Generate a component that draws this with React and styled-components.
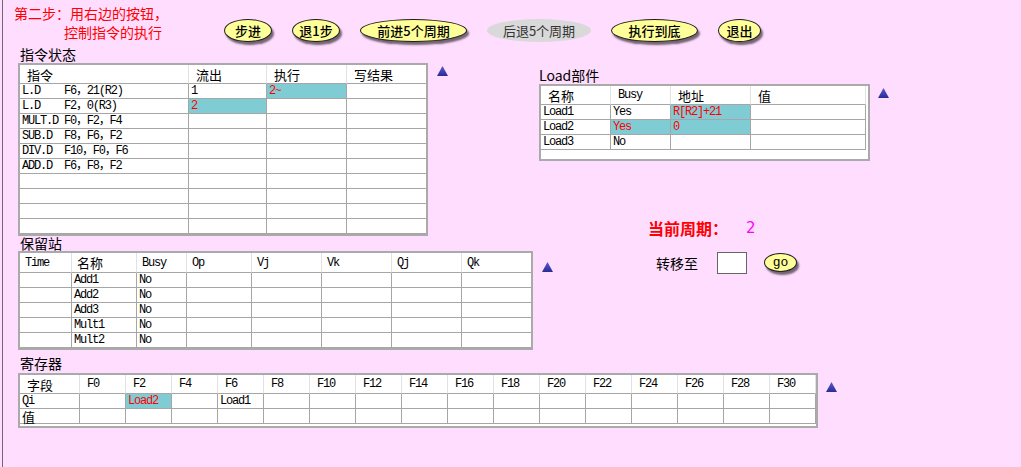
import React from "react";
import styled, { createGlobalStyle } from "styled-components";

const MONO = `"Liberation Mono", "Noto Sans CJK SC", monospace`;
const CJK = `"Noto Sans CJK SC", "Liberation Sans", sans-serif`;
const GRID = "#a6a6a6";

const GlobalStyle = createGlobalStyle`
  html, body {
    margin: 0;
    padding: 0;
    background: #ffddff;
    overflow: hidden;
  }
  body {
    font-family: ${CJK};
  }
`;

const Page = styled.div`
  margin-left: 2px;
  width: 1019px;
  height: 467px;
  box-sizing: border-box;
  border-left: 1px solid #6b6b6b;
  background: #ffddff;
  display: flex;
  flex-direction: column;
`;

const Header = styled.header`
  display: flex;
  align-items: flex-start;
  height: 45px;
  flex-shrink: 0;
`;

const Hint = styled.div`
  margin: 4px 0 0 11px;
  width: 210px;
  color: #ff0000;
  font-size: 14px;
  line-height: 19px;
  div + div {
    padding-left: 50px;
  }
`;

const Toolbar = styled.div`
  display: flex;
  gap: 20px;
  margin-top: 19px;
`;

const PillButton = styled.button`
  width: ${(p) => p.$w}px;
  height: ${(p) => p.$h || 23}px;
  border-radius: 50%;
  padding: 0;
  display: flex;
  align-items: center;
  justify-content: center;
  background: ${(p) => (p.$ghost ? "#d9d9d9" : "#ffff99")};
  border: ${(p) => (p.$ghost ? "none" : "1px solid #1e1e1e")};
  box-shadow: ${(p) => (p.$ghost ? "none" : "2px 3px 2px rgba(0, 0, 0, 0.55)")};
  color: ${(p) => (p.$ghost ? "#333" : "#000")};
  font-family: ${(p) => (p.$mono ? MONO : CJK)};
  font-size: 13px;
  font-weight: ${(p) => (p.$ghost ? 400 : 500)};
  cursor: pointer;
`;

const Main = styled.div`
  display: flex;
  margin-left: 15px;
`;

const LeftCol = styled.div`
  width: 521px;
  flex-shrink: 0;
  display: flex;
  flex-direction: column;
`;

const RightCol = styled.div`
  display: flex;
  flex-direction: column;
  padding-top: 21px;
`;

const Label = styled.div`
  height: ${(p) => p.$h}px;
  line-height: ${(p) => p.$h - (p.$top || 0)}px;
  padding-top: ${(p) => p.$top || 0}px;
  padding-left: ${(p) => (p.$indent === undefined ? 2 : p.$indent)}px;
  box-sizing: border-box;
  font-size: 14px;
  color: #000;
  white-space: nowrap;
`;

const TableRow = styled.div`
  display: flex;
  align-items: flex-start;
  gap: ${(p) => p.$gap}px;
`;

const Frame = styled.div`
  width: ${(p) => p.$w}px;
  box-sizing: border-box;
  border: 2px solid #aaaaaa;
  background: #fff;
  padding-bottom: ${(p) => p.$pb || 0}px;
`;

const Grid = styled.div`
  display: grid;
  grid-template-columns: ${(p) => p.$cols};
  width: max-content;
`;

const Cell = styled.div`
  box-sizing: border-box;
  height: ${(p) => p.$h}px;
  padding-left: ${(p) => p.$pad}px;
  border-bottom: 1px solid ${GRID};
  border-right: ${(p) => (p.$noRight ? "none" : `1px solid ${p.$head ? "#e2e2e2" : GRID}`)};
  background: ${(p) => (p.$hl ? "#80ccd4" : "#fff")};
  color: ${(p) => (p.$hl ? "#ff0000" : "#000")};
  font-family: ${(p) => (p.$mono ? MONO : CJK)};
  font-size: ${(p) => (p.$mono ? 12 : 13)}px;
  letter-spacing: ${(p) => (p.$mono ? "-1.2px" : "0")};
  line-height: 1;
  white-space: pre;
  display: flex;
  align-items: center;
`;

const Tilde = styled.span`
  font-size: 11px;
  letter-spacing: 0;
  vertical-align: 4px;
`;

const Marker = styled.svg`
  flex-shrink: 0;
  margin-top: ${(p) => p.$top}px;
`;

const CycleLine = styled.div`
  margin: 57px 0 0 109px;
  height: 20px;
  line-height: 20px;
  display: flex;
  align-items: center;
`;

const CycleTitle = styled.span`
  color: #ff0000;
  font-size: 16px;
  font-weight: 700;
`;

const CycleValue = styled.span`
  margin-left: 18px;
  color: #ff00ff;
  font-family: "DejaVu Sans", sans-serif;
  font-size: 15px;
`;

const JumpRow = styled.div`
  margin: 12px 0 0 117px;
  height: 25px;
  display: flex;
  align-items: center;
`;

const JumpLabel = styled.span`
  font-size: 14px;
  color: #000;
`;

const JumpInput = styled.input`
  width: 30px;
  height: 22px;
  box-sizing: border-box;
  margin: 0 17px 0 19px;
  border: 1px solid #666;
  background: #fff;
  outline: none;
  padding: 0 2px;
`;

const RegisterSection = styled.div`
  margin-left: 15px;
`;

// CJK-only strings (column titles, "值") use the sans face, everything else the mono face
const isCjkOnly = (s) => typeof s === "string" && s.length > 0 && /^[\u4e00-\u9fff]+$/.test(s);

function Triangle({ top }) {
  return (
    <Marker $top={top} width="11" height="10" viewBox="0 0 11 10">
      <defs>
        <linearGradient id="tri" x1="0" y1="0" x2="0" y2="1">
          <stop offset="0" stopColor="#5a5ad0" />
          <stop offset="1" stopColor="#2b2b95" />
        </linearGradient>
      </defs>
      <polygon points="5.5,0 11,10 0,10" fill="url(#tri)" />
    </Marker>
  );
}

function DataTable({ widths, head, rows, headH, rowH, pad, headPad, fill, frameW, pb }) {
  const cols = widths.map((w) => `${w}px`).join(" ");
  const last = widths.length - 1;
  return (
    <Frame $w={frameW} $pb={pb}>
      <Grid $cols={cols}>
        {head.map((h, i) => (
          <Cell
            key={`h${i}`}
            $head
            $h={headH}
            $pad={headPad}
            $mono={!isCjkOnly(h)}
            $noRight={fill && i === last}
          >
            {h}
          </Cell>
        ))}
        {rows.map((row, r) =>
          row.map((c, i) => {
            const v = c && typeof c === "object" && !React.isValidElement(c) ? c : { t: c };
            return (
              <Cell
                key={`${r}-${i}`}
                $h={rowH}
                $pad={pad}
                $hl={v.hl}
                $mono={!isCjkOnly(v.t)}
                $noRight={fill && i === last}
              >
                {v.t}
              </Cell>
            );
          })
        )}
      </Grid>
    </Frame>
  );
}

const instrRows = [
  ["L.D    F6，21(R2)", "1", { t: <>2<Tilde>~</Tilde></>, hl: true }, ""],
  ["L.D    F2，0(R3)", { t: "2", hl: true }, "", ""],
  ["MULT.D F0，F2，F4", "", "", ""],
  ["SUB.D  F8，F6，F2", "", "", ""],
  ["DIV.D  F10，F0，F6", "", "", ""],
  ["ADD.D  F6，F8，F2", "", "", ""],
  ["", "", "", ""],
  ["", "", "", ""],
  ["", "", "", ""],
  ["", "", "", ""],
];

const loadRows = [
  ["Load1", "Yes", { t: "R[R2]+21", hl: true }, ""],
  ["Load2", { t: "Yes", hl: true }, { t: "0", hl: true }, ""],
  ["Load3", "No", "", ""],
];

const stationRows = ["Add1", "Add2", "Add3", "Mult1", "Mult2"].map((n) => [
  "", n, "No", "", "", "", "", "",
]);

const regNames = Array.from({ length: 16 }, (_, i) => `F${i * 2}`);
const qiRow = ["Qi", ...regNames.map((n) => (n === "F2" ? { t: "Load2", hl: true } : n === "F6" ? "Load1" : ""))];
const valRow = ["值", ...regNames.map(() => "")];

export default function App() {
  return (
    <>
      <GlobalStyle />
      <Page>
        <Header>
          <Hint>
            <div>第二步：用右边的按钮，</div>
            <div>控制指令的执行</div>
          </Hint>
          <Toolbar>
            <PillButton $w={48}>步进</PillButton>
            <PillButton $w={48}>退1步</PillButton>
            <PillButton $w={107}>前进5个周期</PillButton>
            <PillButton $w={104} $ghost>后退5个周期</PillButton>
            <PillButton $w={87}>执行到底</PillButton>
            <PillButton $w={43}>退出</PillButton>
          </Toolbar>
        </Header>

        <Main>
          <LeftCol>
            <Label $h={18}>指令状态</Label>
            <TableRow $gap={9}>
              <DataTable
                widths={[169, 78, 80, 79]}
                frameW={410}
                head={["指令", "流出", "执行", "写结果"]}
                rows={instrRows}
                headH={19}
                rowH={15}
                pad={2}
                headPad={7}
                fill
              />
              <Triangle top={3} />
            </TableRow>

            <Label $h={15}>保留站</Label>
            <TableRow $gap={9}>
              <DataTable
                widths={[52, 65, 50, 65, 70, 70, 70, 69]}
                frameW={515}
                head={["Time", "名称", "Busy", "Op", "Vj", "Vk", "Qj", "Qk"]}
                rows={stationRows}
                headH={20}
                rowH={15}
                pad={2}
                headPad={5}
                fill
              />
              <Triangle top={11} />
            </TableRow>
          </LeftCol>

          <RightCol>
            <Label $h={18} $indent={0}>Load部件</Label>
            <TableRow $gap={8}>
              <DataTable
                widths={[70, 60, 80, 115]}
                frameW={331}
                head={["名称", "Busy", "地址", "值"]}
                rows={loadRows}
                headH={19}
                rowH={15}
                pad={2}
                headPad={7}
                pb={9}
              />
              <Triangle top={4} />
            </TableRow>

            <CycleLine>
              <CycleTitle>当前周期：</CycleTitle>
              <CycleValue>2</CycleValue>
            </CycleLine>
            <JumpRow>
              <JumpLabel>转移至</JumpLabel>
              <JumpInput type="text" />
              <PillButton $w={33} $h={19} $mono>go</PillButton>
            </JumpRow>
          </RightCol>
        </Main>

        <RegisterSection>
          <Label $h={23} $top={4}>寄存器</Label>
          <TableRow $gap={8}>
            <DataTable
              widths={[60, ...regNames.map(() => 46)]}
              frameW={800}
              head={["字段", ...regNames]}
              rows={[qiRow, valRow]}
              headH={19}
              rowH={15}
              pad={2}
              headPad={7}
              pb={2}
            />
            <Triangle top={9} />
          </TableRow>
        </RegisterSection>
      </Page>
    </>
  );
}
